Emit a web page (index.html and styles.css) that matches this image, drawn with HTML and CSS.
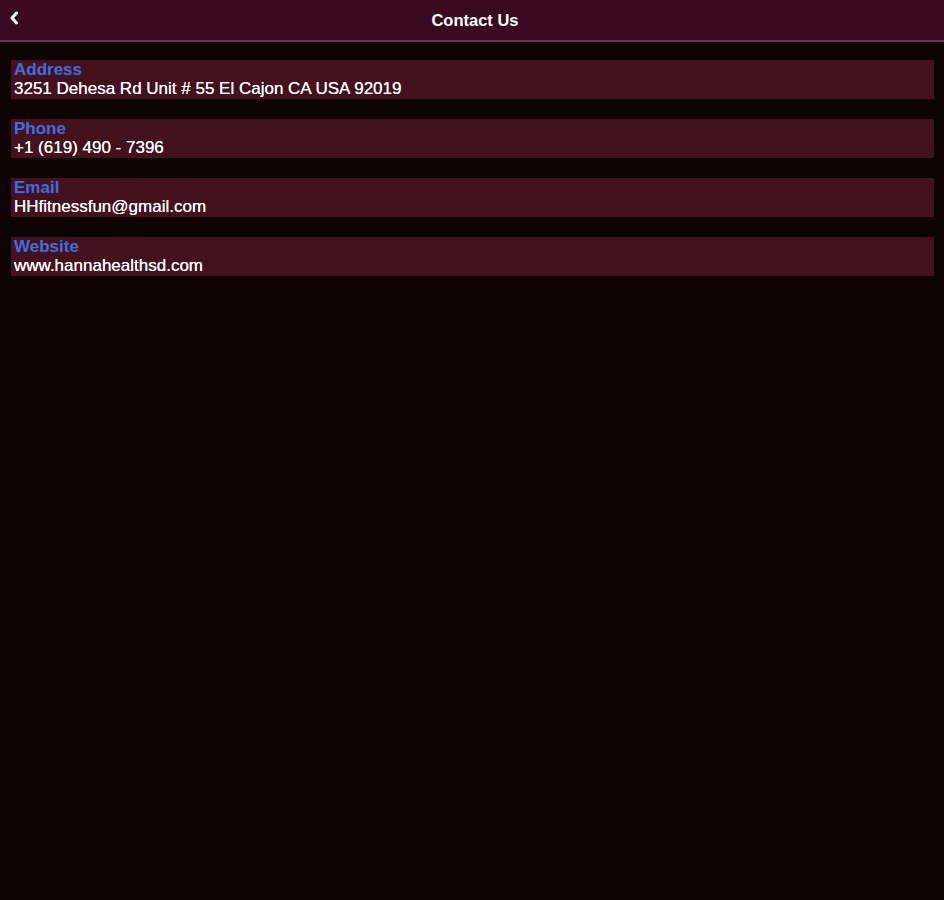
FILE: index.html
```html
<!DOCTYPE html>
<html lang="en">
<head>
    <meta charset="UTF-8">
    <meta name="viewport" content="width=device-width, initial-scale=1.0">
    <title>Contact Us</title>
    <link rel="stylesheet" href="styles.css">
</head>
<body>
    <div class="header">
        <a class="back" href="#">
            <svg width="10" height="14" viewBox="0 0 10 14">
                <path d="M7.5 2 L3 7 L7.5 12" fill="none" stroke="#fff" stroke-width="3" stroke-linecap="round" stroke-linejoin="round"/>
            </svg>
        </a>
        <h1>Contact Us</h1>
    </div>
    <div class="content">
        <div class="item">
            <div class="label">Address</div>
            <div class="value">3251 Dehesa Rd Unit # 55 El Cajon CA USA 92019</div>
        </div>
        <div class="item">
            <div class="label">Phone</div>
            <div class="value">+1 (619) 490 - 7396</div>
        </div>
        <div class="item">
            <div class="label">Email</div>
            <div class="value">HHfitnessfun@gmail.com</div>
        </div>
        <div class="item">
            <div class="label">Website</div>
            <div class="value">www.hannahealthsd.com</div>
        </div>
    </div>
</body>
</html>
```

FILE: styles.css
```css
body {
    margin: 0;
    background-color: #0e0305;
    font-family: "Liberation Sans", Arial, sans-serif;
    color: #fff;
    min-height: 900px;
}
.header {
    position: relative;
    height: 40px;
    background-color: #3a0a22;
    border-bottom: 2px solid #5e3c4c;
    display: flex;
    align-items: center;
    justify-content: center;
    padding-left: 6px;
}
.header h1 {
    margin: 0;
    font-size: 16.5px;
    font-weight: bold;
    color: #fff;
}
.back {
    position: absolute;
    left: 9px;
    top: 11px;
    display: block;
    line-height: 0;
}
.content {
    padding: 18px 10px 0 11px;
    display: flex;
    flex-direction: column;
    gap: 20px;
}
.item {
    background-color: #44121f;
    padding: 0 3px 1px;
    font-size: 17px;
    line-height: 19px;
}
.label {
    color: #3d6fe0;
    font-weight: bold;
}
.value {
    color: #fff;
    text-shadow: 0 0 0.6px #fff;
}
```
